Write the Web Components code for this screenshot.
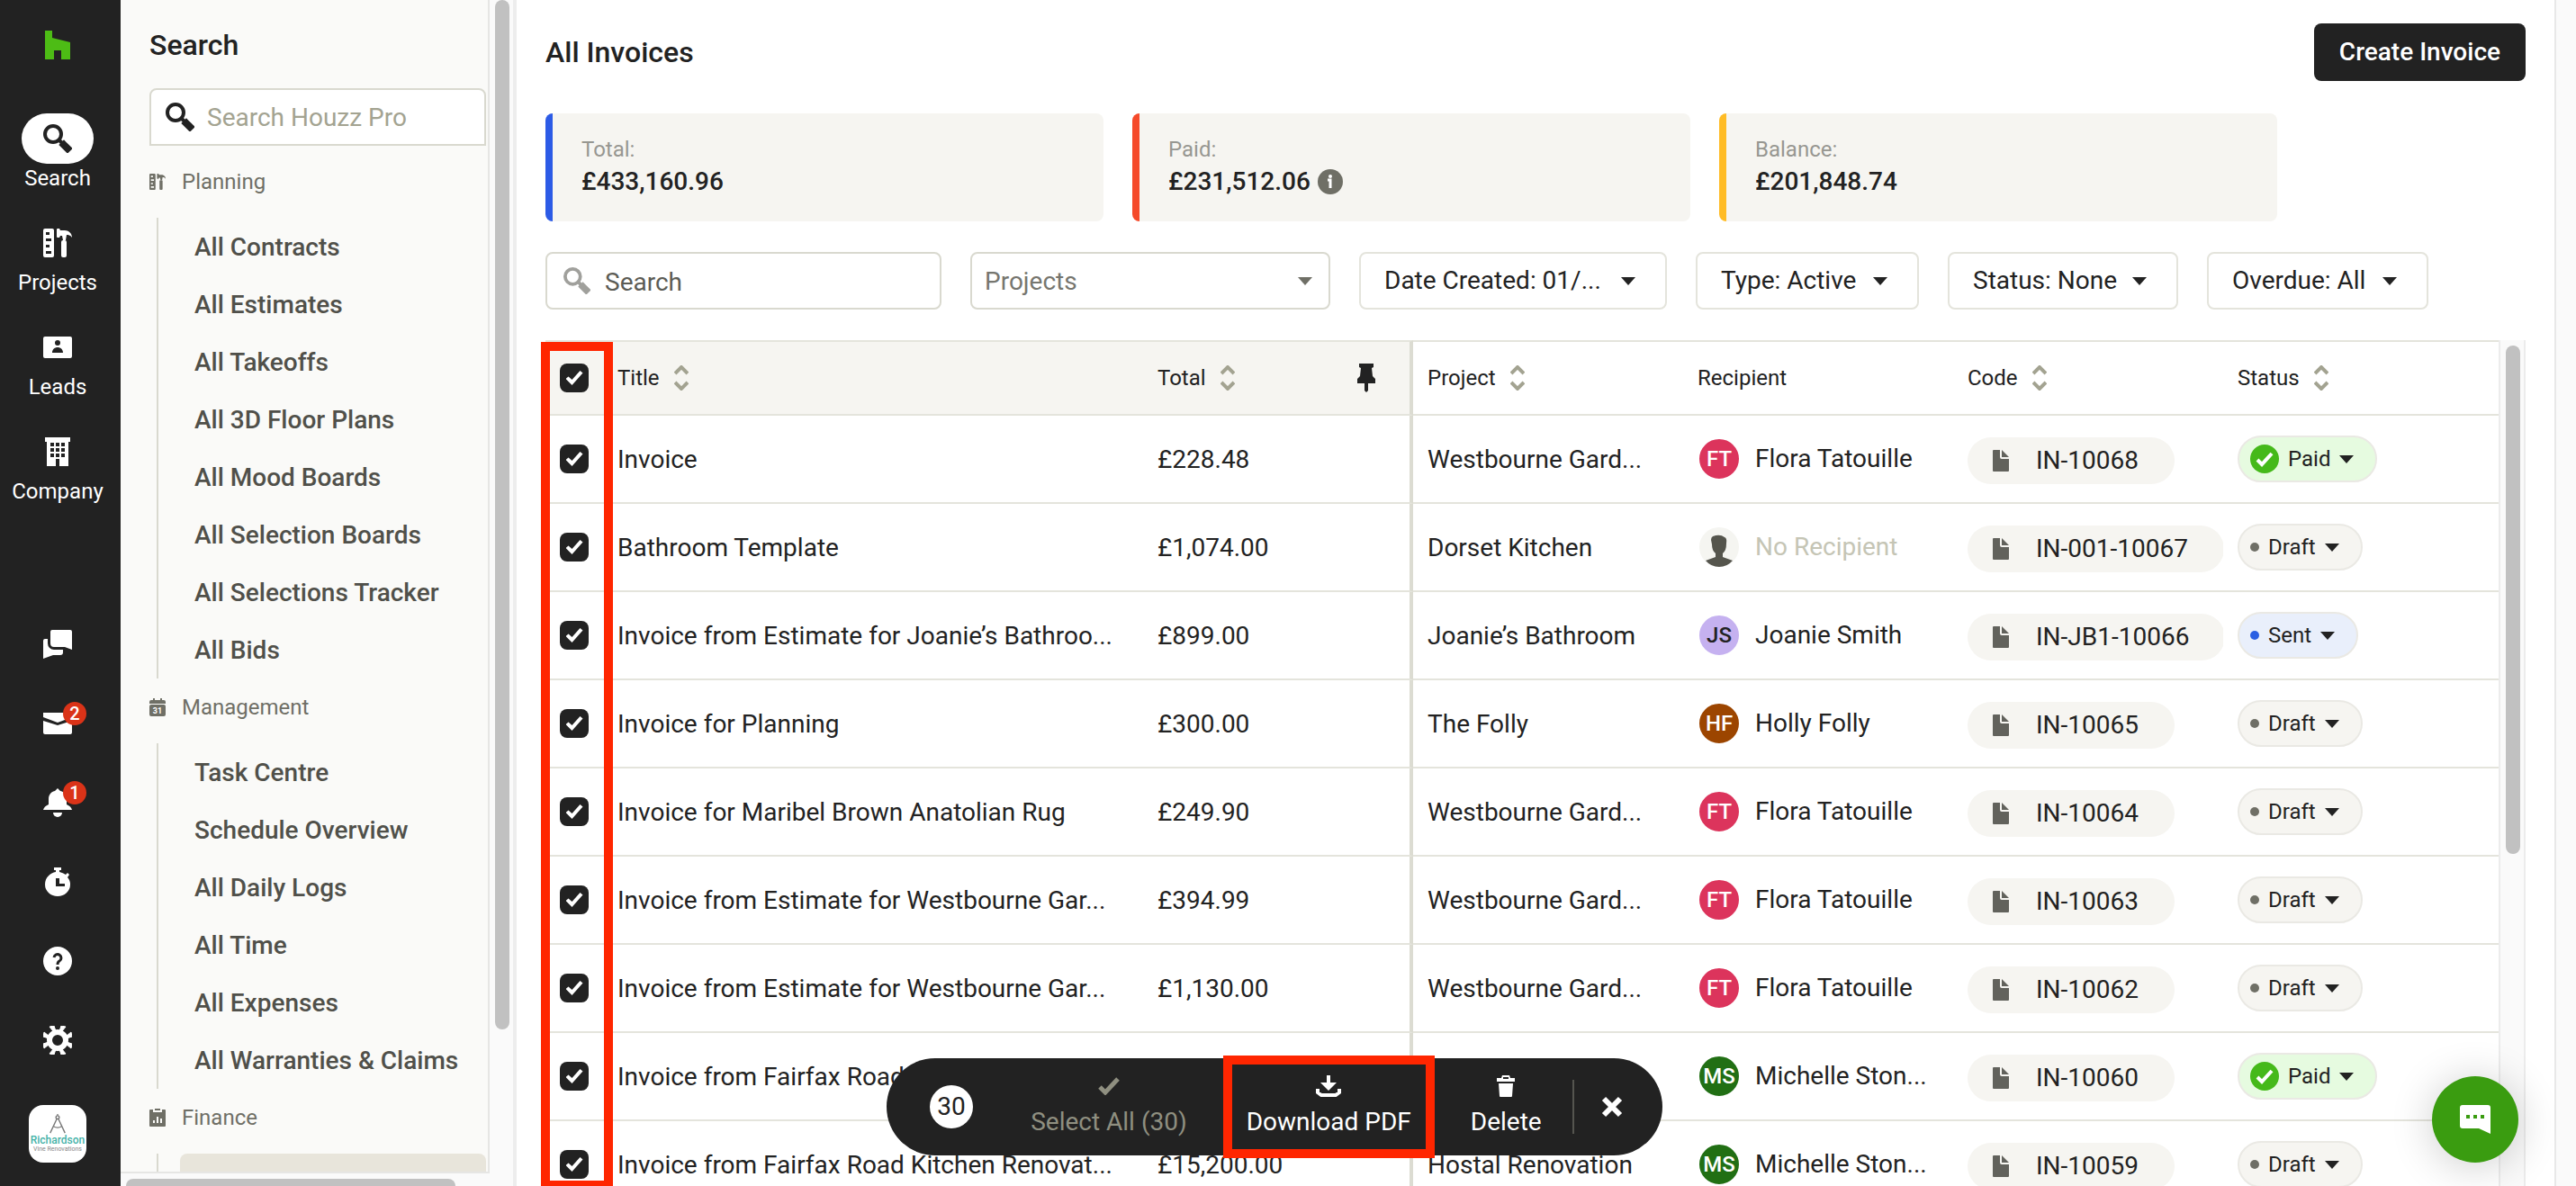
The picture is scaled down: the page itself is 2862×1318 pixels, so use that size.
<!DOCTYPE html>
<html lang="en">
<head>
<meta charset="utf-8">
<title>All Invoices</title>
<style>
    html, body {
        margin: 0;
        height: 100%;
    }

    body {
        --ink: #222222;
        --olive: #a3a391;
        --text-gray: #6f6f66;
        --line: #e4e4dc;
        --box-line: #d9d9cf;
        --surface: #f6f5f1;
        --callout: #ff2600;
        font-family: Roboto, "Liberation Sans", sans-serif;
        font-size: 28px;
        line-height: 40px;
        color: var(--ink);
        background: #ffffff;
        overflow: hidden;
    }
</style>
</head>
<body>
<invoices-app></invoices-app>

<script>
const ICONS = {
    houzz: ['0 0 28 32', '<path d="M0 0h8v8l20 5v19H18V22H10v10H0z"/>'],
    search: ['0 0 32 32', '<g fill="none" stroke="currentColor"><circle cx="11" cy="11" r="9" stroke-width="4"/><path d="M17 17l5 5" stroke-width="4"/><path d="M23 23l4 4" stroke-width="8" stroke-linecap="square" stroke-linejoin="round"/></g>'],
    tools: ['0 0 32 32', '<path fill-rule="evenodd" d="M2 0h8a2 2 0 0 1 2 2v28a2 2 0 0 1-2 2H2a2 2 0 0 1-2-2V2a2 2 0 0 1 2-2zM3 4v3h4V4zM3 11v3h6v-3zM3 18v3h4v-3zM3 25v3h6v-3z"/><path d="M15 1q0-1 1-1h2l1 2h5c4 0 8 3 8 8-2-3-4-3-6-3l-1 6h-3l-1-5h-2l-1 2h-2q-1 0-1-1z"/><rect x="20" y="13" width="6" height="19" rx="2"/>'],
    leads: ['0 0 32 32', '<path fill-rule="evenodd" d="M2 4h28a2 2 0 0 1 2 2v20a2 2 0 0 1-2 2H2a2 2 0 0 1-2-2V6a2 2 0 0 1 2-2zM16 8a3 3 0 1 0 0 6 3 3 0 0 0 0-6zM10 22h12c0-4-3-6-6-6s-6 2-6 6z"/>'],
    company: ['0 0 32 32', '<path fill-rule="evenodd" d="M2 0h28v5h-2v27H18v-8h-4v8H4V5H2zM8 6v4h4V6zM14 6v4h4V6zM20 6v4h4V6zM8 12v4h4v-4zM14 12v4h4v-4zM20 12v4h4v-4zM8 18v4h4v-4zM14 18v4h4v-4zM20 18v4h4v-4z"/>'],
    chat: ['0 0 32 32', '<path d="M10 0h20a2 2 0 0 1 2 2v20l-8-3H12a4 4 0 0 1-4-4V2a2 2 0 0 1 2-2z"/><path d="M0 12a2 2 0 0 1 2-2h3v5a7 7 0 0 0 7 7h10v3a3 3 0 0 1-3 3h-8L0 32z"/>'],
    mail: ['0 0 32 32', '<path d="M0 4h32v5l-16 6L0 9z"/><path d="M0 13l16 5 16-5v13a2 2 0 0 1-2 2H2a2 2 0 0 1-2-2z"/>'],
    bell: ['0 0 32 32', '<path d="M16 0l3 3c5 1 7 5 7 9v6q5 2 6 6H0q1-4 6-6v-6c0-4 2-8 7-9z"/><path d="M11 27h10a5 5 0 0 1-10 0z"/>'],
    timer: ['0 0 32 32', '<path fill-rule="evenodd" d="M12 0h8v3h-2v2q4 1 7 3l2-2 2 2-2 3q3 3 3 8a14 13 0 0 1-28 0C2 11 8 6 14 5V3h-2zM14 12v9h10v-3h-6v-6z"/>'],
    help: ['0 0 32 32', '<circle cx="16" cy="16" r="16"/><path d="M12 12a4 4 0 1 1 6 4q-2 1-2 4" fill="none" stroke="#222" stroke-width="3"/><circle cx="16" cy="24" r="2" fill="#222"/>'],
    gear: ['0 0 32 32', '<circle cx="16" cy="16" r="9" fill="none" stroke="currentColor" stroke-width="6"/><path d="M7 1l5-1 2 6h-3zM25 1l-5-1-2 6h3zM7 31l5 1 2-6h-3zM25 31l-5 1-2-6h3zM1 7l-1 5 6 2v-3zM1 25l-1-5 6-2v3zM31 7l1 5-6 2v-3zM31 25l1-5-6-2v3z" stroke="currentColor" stroke-width="1"/>'],
    compass: ['0 0 20 24', '<g fill="none" stroke="#777" stroke-width="1.5"><circle cx="10" cy="4" r="2"/><path d="M10 0v2M9 6L1 23M11 6l8 17M5 15q5 3 10 0"/></g>'],
    calendar: ['0 0 18 20', '<path d="M2 2h2V0h2v2h6V0h2v2h2q2 0 2 2v2H0V4q0-2 2-2z"/><rect y="7" width="18" height="13" rx="2"/><text x="9" y="17" text-anchor="middle" font-size="9" font-weight="700" fill="#fff">31</text>'],
    clipboard: ['0 0 18 20', '<path fill-rule="evenodd" d="M1 1h3v3h10V1h3q1 0 1 1v17q0 1-1 1H1q-1 0-1-1V2q0-1 1-1zM4 13v3h2v-3zM8 9v7h2V9zM12 11v5h2v-5z"/><rect x="6" width="6" height="2"/>'],
    info: ['0 0 28 28', '<circle cx="14" cy="14" r="14"/><circle cx="14" cy="8" r="2" fill="#fff"/><path d="M11 12h3v9" fill="none" stroke="#fff" stroke-width="3"/>'],
    caret: ['0 0 16 9', '<path d="M0 0h16L8 9z"/>'],
    sort: ['0 0 16 28', '<path d="M1 9l7-7 7 7M1 19l7 7 7-7" fill="none" stroke="currentColor" stroke-width="4"/>'],
    pin: ['0 0 20 32', '<path d="M2 0h16v4l-2 1 1 9 3 3v5h-8v8l-2 2-2-2v-8H0v-5l3-3 1-9-2-1z"/>'],
    doc: ['0 0 18 24', '<path d="M0 1q0-1 1-1h7v8q0 2 2 2h8v13q0 1-1 1H1q-1 0-1-1z"/><path d="M10 0l8 8h-8z"/>'],
    paid: ['0 0 32 32', '<circle cx="16" cy="16" r="16"/><path d="M8 17l5 5 11-12" fill="none" stroke="#fff" stroke-width="4"/>'],
    check: ['0 0 24 20', '<path d="M2 11l6 6L22 2" fill="none" stroke="currentColor" stroke-width="5"/>'],
    download: ['0 0 28 24', '<path d="M12 0h4v8h7l-9 9-9-9h7z"/><path d="M2 15v4l4 3h16l4-3v-4" fill="none" stroke="currentColor" stroke-width="4"/>'],
    trash: ['0 0 20 24', '<path d="M6 0h8l1 3h5v4H0V3h5zM2 9h16l-1 14q0 1-1 1H4q-1 0-1-1z"/><path d="M7 3h6" stroke="#222" stroke-width="2"/>'],
    close: ['0 0 24 24', '<path d="M3 3l18 18M21 3L3 21" stroke="currentColor" stroke-width="6"/>'],
    message: ['0 0 34 32', '<path fill-rule="evenodd" d="M3 0h28a3 3 0 0 1 3 3v29l-13-6H3a3 3 0 0 1-3-3V3a3 3 0 0 1 3-3zM7 11v4h4v-4zM15 11v4h4v-4zM23 11v4h4v-4z"/>'],
    person: ['0 0 44 44', '<path d="M13 14q0-3 2-4 8-3 13 1 3 1 2 7 0 8-4 11v4l11 4q-6 7-15 7T7 37l11-4v-4q-4-3-4-10z"/>']
};

class HpIcon extends HTMLElement {
    connectedCallback() {
        const [box, shapes] = ICONS[this.getAttribute('name')];
        this.attachShadow({ mode: 'open' }).innerHTML = `
            <style>
                :host { display: block; flex: none; }
                svg { display: block; width: 100%; height: 100%; fill: currentColor; }
            </style>
            <svg viewBox="${box}" aria-hidden="true">${shapes}</svg>
        `;
    }
}
customElements.define('hp-icon', HpIcon);

class NavRail extends HTMLElement {
    constructor() {
        super();
        const items = [['search', 'Search'], ['tools', 'Projects'], ['leads', 'Leads'], ['company', 'Company']];
        const tools = [['chat', 'Messages'], ['mail', 'Inbox', 2], ['bell', 'Notifications', 1], ['timer', 'Timer'], ['help', 'Help'], ['gear', 'Settings']];
        this.attachShadow({ mode: 'open' }).innerHTML = `
            <style>
                :host {
                    display: flex;
                    flex-direction: column;
                    justify-content: space-between;
                    box-sizing: border-box;
                    padding: 34px 6px 26px 0;
                    background: var(--ink);
                    color: #ffffff;
                }
                nav, .tools { display: flex; flex-direction: column; align-items: center; }
                nav { gap: 28px; }
                .logo { color: #4dbc15; margin-bottom: 32px; }
                .logo hp-icon { width: 28px; height: 32px; }
                .item {
                    display: flex;
                    flex-direction: column;
                    align-items: center;
                    font-size: 24px;
                    line-height: 32px;
                    color: inherit;
                    text-decoration: none;
                }
                .pill { display: grid; place-items: center; width: 80px; height: 56px; border-radius: 28px; }
                .pill hp-icon, .tool hp-icon { width: 32px; height: 32px; }
                .active .pill { background: #ffffff; color: var(--ink); }
                .tools { gap: 56px; }
                button { padding: 0; border: 0; background: none; color: inherit; font: inherit; }
                .tool { position: relative; }
                .badge {
                    position: absolute;
                    top: -8px;
                    left: 22px;
                    width: 26px;
                    height: 26px;
                    border-radius: 13px;
                    background: #da3318;
                    font-size: 20px;
                    font-weight: 500;
                    line-height: 26px;
                    text-align: center;
                }
                .account {
                    display: flex;
                    flex-direction: column;
                    align-items: center;
                    width: 64px;
                    height: 64px;
                    padding-top: 10px;
                    box-sizing: border-box;
                    border-radius: 16px;
                    overflow: hidden;
                    background: #ffffff;
                    color: #45b3a9;
                    font-size: 12px;
                    font-weight: 500;
                    line-height: 14px;
                }
                .account hp-icon { width: 20px; height: 22px; }
                .account small { font-size: 7px; font-weight: 400; line-height: 6px; color: #888888; white-space: nowrap; }
            </style>
            <nav>
                <a class="logo" href="#" aria-label="Houzz Pro"><hp-icon name="houzz"></hp-icon></a>
                ${items.map(([icon, label], i) => `
                    <a class="item ${i ? '' : 'active'}" href="#"><span class="pill"><hp-icon name="${icon}"></hp-icon></span>${label}</a>`).join('')}
            </nav>
            <div class="tools">
                ${tools.map(([icon, label, count]) => `
                    <button class="tool" aria-label="${label}"><hp-icon name="${icon}"></hp-icon>${count ? `<span class="badge">${count}</span>` : ''}</button>`).join('')}
                <button class="account"><hp-icon name="compass"></hp-icon>Richardson<small>Vine Renovations</small></button>
            </div>
        `;
    }
}
customElements.define('nav-rail', NavRail);

class MenuGroup extends HTMLElement {
    connectedCallback() {
        this.attachShadow({ mode: 'open' }).innerHTML = `
            <style>
                :host { display: block; }
                h3 {
                    display: flex;
                    align-items: center;
                    gap: 18px;
                    height: 64px;
                    margin: 0 0 8px;
                    font-size: 24px;
                    font-weight: 400;
                    color: var(--text-gray);
                }
                h3 hp-icon { width: 18px; height: 20px; }
                div { margin-left: 8px; padding-left: 24px; border-left: 2px solid var(--box-line); }
                ::slotted(a) {
                    display: block;
                    height: 64px;
                    padding-left: 16px;
                    border-radius: 8px;
                    line-height: 66px;
                    font-weight: 500;
                    color: #50504a;
                    text-decoration: none;
                    white-space: nowrap;
                }
                ::slotted(a[aria-current]) { background: #e8e5db; }
            </style>
            <h3><hp-icon name="${this.getAttribute('icon')}"></hp-icon>${this.getAttribute('label')}</h3>
            <div><slot></slot></div>
        `;
    }
}
customElements.define('menu-group', MenuGroup);

class SideMenu extends HTMLElement {
    constructor() {
        super();
        const links = names => names.map(name => `<a href="#">${name}</a>`).join('');
        this.attachShadow({ mode: 'open' }).innerHTML = `
            <style>
                :host {
                    display: grid;
                    grid-template: minmax(0, 1fr) 14px / minmax(0, 1fr) 26px;
                    background: #fafafa;
                    overflow: hidden;
                }
                .panel {
                    box-sizing: border-box;
                    padding: 30px 2px 0 32px;
                    border: solid #e6e6e4;
                    border-width: 0 2px 2px 0;
                    background: #fafaf8;
                    overflow: hidden;
                }
                h2 { margin: 0 0 28px; font-size: 32px; font-weight: 500; }
                label {
                    display: flex;
                    align-items: center;
                    gap: 14px;
                    height: 64px;
                    margin-bottom: 8px;
                    padding: 0 16px;
                    box-sizing: border-box;
                    border: 2px solid var(--box-line);
                    border-radius: 8px 8px 0 0;
                    background: #ffffff;
                }
                label hp-icon { width: 32px; height: 32px; }
                input { flex: 1; min-width: 0; padding: 2px 0 0; border: 0; outline: 0; background: none; font: inherit; }
                input::placeholder { color: var(--olive); }
                .down { width: 16px; height: 1144px; margin-left: 6px; border-radius: 8px; background: #c1c1c1; }
                .across { width: 366px; height: 16px; margin: 6px 0 0 6px; border-radius: 8px; background: #c1c1c1; }
            </style>
            <section class="panel">
                <h2>Search</h2>
                <label><hp-icon name="search"></hp-icon><input type="search" placeholder="Search Houzz Pro" aria-label="Search Houzz Pro"></label>
                <menu-group icon="tools" label="Planning">${links(['All Contracts', 'All Estimates', 'All Takeoffs', 'All 3D Floor Plans', 'All Mood Boards', 'All Selection Boards', 'All Selections Tracker', 'All Bids'])}</menu-group>
                <menu-group icon="calendar" label="Management">${links(['Task Centre', 'Schedule Overview', 'All Daily Logs', 'All Time', 'All Expenses', 'All Warranties &amp; Claims'])}</menu-group>
                <menu-group icon="clipboard" label="Finance"><a href="#" aria-current="page" aria-label="Invoices"></a></menu-group>
            </section>
            <div class="down"></div>
            <div class="across"></div>
        `;
    }
}
customElements.define('side-menu', SideMenu);

class StatCard extends HTMLElement {
    connectedCallback() {
        this.attachShadow({ mode: 'open' }).innerHTML = `
            <style>
                :host {
                    display: block;
                    box-sizing: border-box;
                    flex: 0 1 620px;
                    padding: 24px 32px;
                    border-left: 8px solid var(--accent);
                    border-radius: 8px;
                    background: var(--surface);
                }
                .label { font-size: 24px; line-height: 32px; color: #979791; }
                .value { display: flex; align-items: center; gap: 8px; font-weight: 500; }
                ::slotted(hp-icon) { width: 28px; height: 28px; color: var(--text-gray); }
            </style>
            <div class="label">${this.getAttribute('label')}</div>
            <div class="value">${this.getAttribute('value')}<slot></slot></div>
        `;
    }
}
customElements.define('stat-card', StatCard);

class FilterBar extends HTMLElement {
    constructor() {
        super();
        this.attachShadow({ mode: 'open' }).innerHTML = `
            <style>
                :host { display: flex; gap: 32px; }
                .box, button {
                    display: flex;
                    align-items: center;
                    box-sizing: border-box;
                    height: 64px;
                    border: 2px solid var(--box-line);
                    border-radius: 8px;
                    background: #ffffff;
                    font: inherit;
                    color: var(--ink);
                    white-space: nowrap;
                }
                .search { width: 440px; padding: 0 18px; gap: 16px; }
                .search hp-icon { width: 30px; height: 30px; color: #a0a09c; }
                input, select { flex: 1; min-width: 0; padding: 0; border: 0; outline: 0; background: none; font: inherit; appearance: none; }
                input { padding-top: 4px; }
                input::placeholder { color: #5c5c55; }
                .projects { width: 400px; padding: 0 18px 0 14px; }
                select { padding-top: 2px; color: #76766f; }
                hp-icon[name="caret"] { width: 16px; height: 9px; }
                .projects hp-icon { color: var(--text-gray); }
                button { justify-content: space-between; padding: 0 33px 0 26px; border-color: var(--line); }
                .date { width: 342px; }
                .type { width: 248px; }
                .status { width: 256px; }
                .overdue { width: 246px; }
            </style>
            <label class="box search"><hp-icon name="search"></hp-icon><input type="search" placeholder="Search" aria-label="Search invoices"></label>
            <label class="box projects"><select aria-label="Projects"><option>Projects</option></select><hp-icon name="caret"></hp-icon></label>
            <button class="date">Date Created: 01/...<hp-icon name="caret"></hp-icon></button>
            <button class="type">Type: Active<hp-icon name="caret"></hp-icon></button>
            <button class="status">Status: None<hp-icon name="caret"></hp-icon></button>
            <button class="overdue">Overdue: All<hp-icon name="caret"></hp-icon></button>
        `;
    }
}
customElements.define('filter-bar', FilterBar);

class StatusPill extends HTMLElement {
    connectedCallback() {
        const state = this.getAttribute('state');
        this.attachShadow({ mode: 'open' }).innerHTML = `
            <style>
                :host { display: block; }
                button {
                    display: flex;
                    align-items: center;
                    gap: 10px;
                    height: 52px;
                    box-sizing: border-box;
                    padding: 0 24px 0 12px;
                    border: 2px solid #eae9e4;
                    border-radius: 26px;
                    background: var(--surface);
                    color: var(--ink);
                    font: inherit;
                    font-size: 24px;
                }
                .dot { width: 10px; height: 10px; border-radius: 5px; background: var(--text-gray); }
                .Sent { background: #e9effb; }
                .Sent .dot { background: #2a5fe3; }
                .Paid { background: #e6fbe0; }
                hp-icon[name="paid"] { width: 32px; height: 32px; color: #45b91a; }
                hp-icon[name="caret"] { width: 16px; height: 9px; }
            </style>
            <button class="${state}">${state === 'Paid' ? '<hp-icon name="paid"></hp-icon>' : '<span class="dot"></span>'}${state}<hp-icon name="caret"></hp-icon></button>
        `;
    }
}
customElements.define('status-pill', StatusPill);

const PEOPLE = {
    'Flora Tatouille': ['FT', '#dc345c', '#ffffff'],
    'Joanie Smith': ['JS', '#c5b1f0', '#222222'],
    'Holly Folly': ['HF', '#9c4500', '#ffffff'],
    'Michelle Ston...': ['MS', '#216f14', '#ffffff']
};

// title, total, project, recipient, code, status
const INVOICES = [
    ['Invoice', '£228.48', 'Westbourne Gard...', 'Flora Tatouille', 'IN-10068', 'Paid'],
    ['Bathroom Template', '£1,074.00', 'Dorset Kitchen', '', 'IN-001-10067', 'Draft'],
    ['Invoice from Estimate for Joanie’s Bathroo...', '£899.00', 'Joanie’s Bathroom', 'Joanie Smith', 'IN-JB1-10066', 'Sent'],
    ['Invoice for Planning', '£300.00', 'The Folly', 'Holly Folly', 'IN-10065', 'Draft'],
    ['Invoice for Maribel Brown Anatolian Rug', '£249.90', 'Westbourne Gard...', 'Flora Tatouille', 'IN-10064', 'Draft'],
    ['Invoice from Estimate for Westbourne Gar...', '£394.99', 'Westbourne Gard...', 'Flora Tatouille', 'IN-10063', 'Draft'],
    ['Invoice from Estimate for Westbourne Gar...', '£1,130.00', 'Westbourne Gard...', 'Flora Tatouille', 'IN-10062', 'Draft'],
    ['Invoice from Fairfax Road', '', '', 'Michelle Ston...', 'IN-10060', 'Paid'],
    ['Invoice from Fairfax Road Kitchen Renovat...', '£15,200.00', 'Hostal Renovation', 'Michelle Ston...', 'IN-10059', 'Draft']
];

class InvoiceTable extends HTMLElement {
    constructor() {
        super();
        this.attachShadow({ mode: 'open' }).innerHTML = `
            <style>
                :host { display: block; position: relative; min-height: 0; }
                .clip { display: grid; grid-template-columns: minmax(0, 1fr) 30px; height: 100%; overflow: hidden; }
                table { width: 100%; table-layout: fixed; border-collapse: separate; border-spacing: 0; align-self: start; }
                .c-check { width: 64px; }
                .c-title { width: 600px; }
                .c-mid { width: 300px; }
                th, td {
                    box-sizing: border-box;
                    padding: 0 0 0 16px;
                    border-bottom: 2px solid var(--line);
                    text-align: left;
                    white-space: nowrap;
                    overflow: hidden;
                }
                th { height: 84px; border-top: 2px solid var(--line); font-size: 24px; font-weight: 400; }
                td { height: 98px; }
                .text { padding-top: 2px; }
                .total { border-right: 4px solid #dcdcd2; }
                .pinned { background: var(--surface); }
                .head { display: flex; align-items: center; }
                .head button { display: flex; align-items: center; gap: 16px; padding: 0; border: 0; background: none; font: inherit; color: inherit; }
                hp-icon[name="sort"] { width: 16px; height: 28px; color: var(--olive); }
                .head .pin { margin: 0 38px 0 auto; }
                hp-icon[name="pin"] { width: 20px; height: 32px; }
                input {
                    display: grid;
                    place-items: center;
                    width: 32px;
                    height: 32px;
                    margin: 0;
                    border-radius: 8px;
                    appearance: none;
                    background: var(--ink);
                }
                input:checked::after {
                    content: "";
                    width: 19px;
                    height: 16px;
                    background: #ffffff;
                    clip-path: polygon(0 56%, 16% 40%, 37% 62%, 84% 0, 100% 16%, 37% 100%);
                }
                .person { display: flex; align-items: center; gap: 16px; }
                .avatar {
                    display: grid;
                    place-items: center;
                    flex: none;
                    width: 44px;
                    height: 44px;
                    border: 2px solid #ffffff;
                    border-radius: 24px;
                    font-size: 24px;
                    font-weight: 500;
                }
                .avatar hp-icon { width: 44px; height: 44px; color: #55554d; }
                .none { color: #c5c5b5; }
                .none .avatar { background: #f5f5f1; }
                .code {
                    display: inline-flex;
                    align-items: center;
                    gap: 30px;
                    height: 52px;
                    margin-top: 4px;
                    padding: 0 40px 0 28px;
                    border-radius: 26px;
                    background: var(--surface);
                    color: inherit;
                    text-decoration: none;
                    vertical-align: middle;
                }
                .code hp-icon { width: 18px; height: 24px; color: #62625c; }
                .track { border: solid #ececec; border-width: 0 2px; background: #fafafa; }
                .thumb { width: 16px; height: 565px; margin: 6px 0 0 6px; border-radius: 8px; background: #c1c1c1; }
                .mark {
                    position: absolute;
                    top: 2px;
                    bottom: -4px;
                    left: -5px;
                    width: 80px;
                    box-sizing: border-box;
                    border: 10px solid var(--callout);
                    pointer-events: none;
                }
            </style>
            <div class="clip">
                <table>
                    <colgroup><col class="c-check"><col class="c-title"><col class="c-mid"><col class="c-mid"><col class="c-mid"><col class="c-mid"><col></colgroup>
                    <thead>
                        <tr>
                            <th class="pinned"><input type="checkbox" checked aria-label="Select all invoices"></th>
                            <th class="pinned"><div class="head"><button>Title<hp-icon name="sort"></hp-icon></button></div></th>
                            <th class="pinned total"><div class="head"><button>Total<hp-icon name="sort"></hp-icon></button><button class="pin" aria-label="Unpin columns"><hp-icon name="pin"></hp-icon></button></div></th>
                            <th><div class="head"><button>Project<hp-icon name="sort"></hp-icon></button></div></th>
                            <th>Recipient</th>
                            <th><div class="head"><button>Code<hp-icon name="sort"></hp-icon></button></div></th>
                            <th><div class="head"><button>Status<hp-icon name="sort"></hp-icon></button></div></th>
                        </tr>
                    </thead>
                    <tbody>${INVOICES.map(row => this.row(row)).join('')}</tbody>
                </table>
                <div class="track"><div class="thumb"></div></div>
            </div>
            <div class="mark"></div>
        `;
    }

    row([title, total, project, recipient, code, status]) {
        return `
            <tr>
                <td><input type="checkbox" checked aria-label="Select ${code}"></td>
                <td class="text">${title}</td>
                <td class="text total">${total}</td>
                <td class="text">${project}</td>
                <td>${this.person(recipient)}</td>
                <td><a class="code" href="#"><hp-icon name="doc"></hp-icon>${code}</a></td>
                <td><status-pill state="${status}"></status-pill></td>
            </tr>`;
    }

    person(name) {
        if (!name) {
            return '<div class="person none"><span class="avatar"><hp-icon name="person"></hp-icon></span>No Recipient</div>';
        }
        const [initials, background, color] = PEOPLE[name];
        return `<div class="person"><span class="avatar" style="background: ${background}; color: ${color}">${initials}</span>${name}</div>`;
    }
}
customElements.define('invoice-table', InvoiceTable);

class BulkActions extends HTMLElement {
    constructor() {
        super();
        this.attachShadow({ mode: 'open' }).innerHTML = `
            <style>
                :host {
                    display: flex;
                    align-items: center;
                    justify-content: space-between;
                    box-sizing: border-box;
                    width: 862px;
                    height: 108px;
                    padding: 0 44px 0 48px;
                    border-radius: 54px;
                    background: var(--ink);
                    color: #ffffff;
                }
                .count { width: 48px; height: 48px; border-radius: 24px; background: #ffffff; color: var(--ink); line-height: 48px; text-align: center; }
                .actions { display: flex; gap: 66px; padding: 0 4px 6px 34px; }
                button {
                    display: flex;
                    flex-direction: column;
                    align-items: center;
                    gap: 8px;
                    position: relative;
                    padding: 0;
                    border: 0;
                    background: none;
                    color: inherit;
                    font: inherit;
                    line-height: 32px;
                    white-space: nowrap;
                }
                button:disabled { color: #8f8f80; }
                .icon { display: grid; place-items: center; height: 32px; }
                hp-icon { width: 28px; height: 24px; }
                hp-icon[name="trash"] { width: 20px; }
                hp-icon[name="check"] { width: 24px; height: 20px; }
                hp-icon[name="close"] { width: 24px; }
                hr { width: 2px; height: 60px; margin: 0; border: 0; background: #55554f; }
                /* red frame round the action */
                .marked::after {
                    content: "";
                    position: absolute;
                    inset: -18px -26px -24px;
                    border: 10px solid var(--callout);
                }
            </style>
            <span class="count">30</span>
            <div class="actions">
                <button disabled><span class="icon"><hp-icon name="check"></hp-icon></span>Select All (30)</button>
                <button class="marked"><span class="icon"><hp-icon name="download"></hp-icon></span>Download PDF</button>
                <button><span class="icon"><hp-icon name="trash"></hp-icon></span>Delete</button>
            </div>
            <hr>
            <button aria-label="Close"><hp-icon name="close"></hp-icon></button>
        `;
    }
}
customElements.define('bulk-actions', BulkActions);

class InvoicesApp extends HTMLElement {
    constructor() {
        super();
        this.attachShadow({ mode: 'open' }).innerHTML = `
            <style>
                :host {
                    display: grid;
                    grid-template: 100vh / 134px 436px minmax(0, 1fr) 24px;
                    position: relative;
                    height: 100vh;
                    overflow: hidden;
                }
                main {
                    display: flex;
                    flex-direction: column;
                    min-width: 0;
                    box-sizing: border-box;
                    padding: 26px 32px 0;
                    border-left: 4px solid #ededed;
                }
                header { display: flex; align-items: center; justify-content: space-between; margin-bottom: 36px; }
                h1 { margin: 0; font-size: 32px; font-weight: 500; }
                .create {
                    height: 64px;
                    padding: 0 28px;
                    border: 0;
                    border-radius: 8px;
                    background: var(--ink);
                    color: #ffffff;
                    font: inherit;
                    font-weight: 500;
                }
                .stats { display: flex; gap: 32px; }
                filter-bar { margin: 34px 0; }
                invoice-table { flex: 1; }
                .edge { border-left: 2px solid #e8e8e8; background: #fafafa; }
                bulk-actions { position: absolute; bottom: 34px; left: calc(50% - 446px); }
                .help {
                    display: grid;
                    place-items: center;
                    position: absolute;
                    right: 64px;
                    bottom: 26px;
                    width: 96px;
                    height: 96px;
                    padding: 0;
                    border: 0;
                    border-radius: 48px;
                    background: #3a9c10;
                    color: #ffffff;
                    box-shadow: 0 4px 48px rgba(0, 0, 0, 0.2);
                }
                .help hp-icon { width: 34px; height: 32px; }
            </style>
            <nav-rail></nav-rail>
            <side-menu></side-menu>
            <main>
                <header><h1>All Invoices</h1><button class="create">Create Invoice</button></header>
                <div class="stats">
                    <stat-card label="Total:" value="£433,160.96" style="--accent: #2c5be6"></stat-card>
                    <stat-card label="Paid:" value="£231,512.06" style="--accent: #f54a2a"><hp-icon name="info"></hp-icon></stat-card>
                    <stat-card label="Balance:" value="£201,848.74" style="--accent: #ffbc26"></stat-card>
                </div>
                <filter-bar></filter-bar>
                <invoice-table></invoice-table>
            </main>
            <div class="edge"></div>
            <bulk-actions></bulk-actions>
            <button class="help" aria-label="Chat with us"><hp-icon name="message"></hp-icon></button>
        `;
    }
}
customElements.define('invoices-app', InvoicesApp);
</script>
</body>
</html>
